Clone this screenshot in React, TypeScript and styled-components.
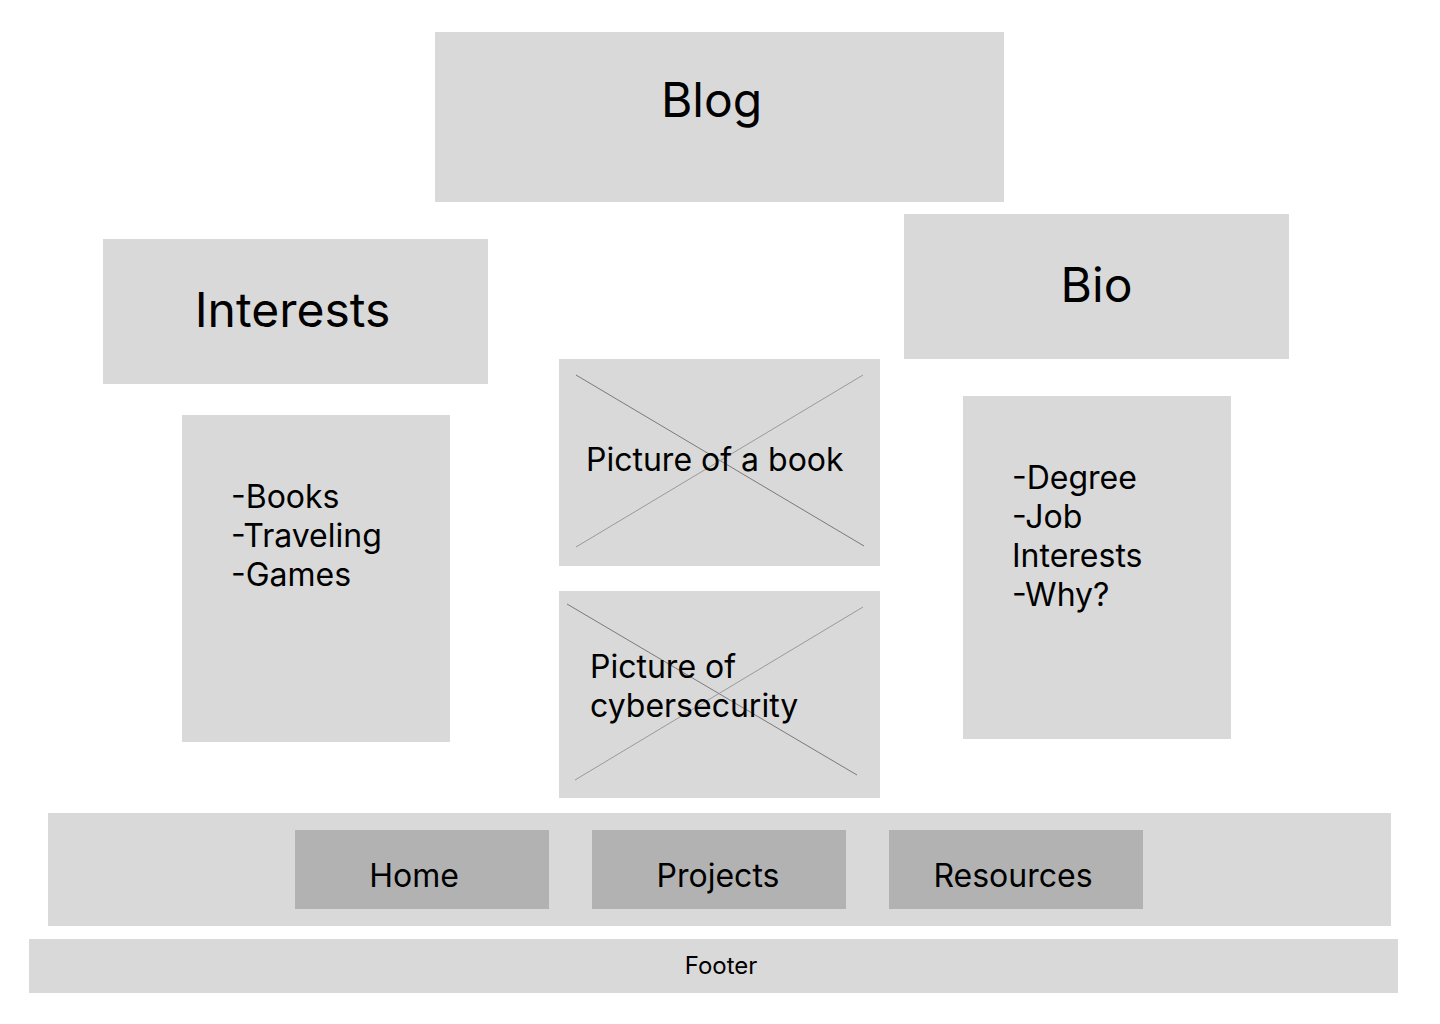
import styled, { createGlobalStyle } from "styled-components";

const GlobalStyle = createGlobalStyle`
  body {
    margin: 0;
    background: #ffffff;
    font-family: Inter, "Noto Sans", sans-serif;
    color: #000000;
  }
`;

const UiPage = styled.div`
  width: 1440px;
  min-height: 1024px;
  padding-top: 32px;
  box-sizing: border-box;
`;

const UiBlogRow = styled.div`
  display: flex;
  padding-left: 435px;
`;

const UiBlog = styled.div`
  display: flex;
  justify-content: center;
  width: 569px;
  height: 170px;
  padding: 39px 16px 0 0;
  box-sizing: border-box;
  background-color: #d9d9d9;
  font-size: 48px;
  line-height: 58px;
`;

const UiColumns = styled.div`
  display: flex;
  align-items: flex-start;
  padding-left: 103px;
`;

const UiColumn = styled.div<{ $top: number; $width: number; $gap: number }>`
  display: flex;
  flex-direction: column;
  width: ${(p) => p.$width}px;
  padding-top: ${(p) => p.$top}px;
  margin-right: ${(p) => p.$gap}px;
`;

const UiHeading = styled.div<{ $shiftX?: number }>`
  display: flex;
  align-items: center;
  justify-content: center;
  width: 385px;
  height: 145px;
  padding: 0 ${(p) => p.$shiftX ?? 0}px 4px 0;
  box-sizing: border-box;
  background-color: #d9d9d9;
  font-size: 48px;
  line-height: 58px;
`;

const UiList = styled.div<{ $indent: number; $top: number; $height: number }>`
  width: 268px;
  height: ${(p) => p.$height}px;
  margin: ${(p) => p.$top}px 0 0 ${(p) => p.$indent}px;
  padding: 62px 0 0 49px;
  box-sizing: border-box;
  background-color: #d9d9d9;
`;

const UiListText = styled.div<{ $width: number }>`
  width: ${(p) => p.$width}px;
  font-size: 32px;
  line-height: 39px;
`;

const UiPicture = styled.div<{ $padLeft: number; $shift: number }>`
  position: relative;
  display: flex;
  align-items: center;
  width: 321px;
  height: 207px;
  padding: 0 20px ${(p) => p.$shift}px ${(p) => p.$padLeft}px;
  box-sizing: border-box;
  background-color: #d9d9d9;
  font-size: 32px;
  line-height: 39px;

  & + & {
    margin-top: 25px;
  }
`;

const UiCross = styled.svg`
  position: absolute;
  inset: 0;
  width: 100%;
  height: 100%;
  pointer-events: none;
`;

const UiPictureText = styled.span`
  position: relative;
`;

const UiNav = styled.nav`
  display: flex;
  gap: 43px;
  width: 1343px;
  height: 113px;
  margin: 15px 0 0 48px;
  padding: 17px 0 0 247px;
  box-sizing: border-box;
  background-color: #d9d9d9;
`;

const UiNavBtn = styled.button<{ $shiftX: number }>`
  width: 254px;
  height: 79px;
  padding: 12px ${(p) => p.$shiftX}px 0 0;
  border: none;
  background-color: #b2b2b2;
  font-family: Inter, "Noto Sans", sans-serif;
  font-size: 32px;
  color: #000000;
  cursor: pointer;
`;

const UiFooter = styled.footer`
  display: flex;
  align-items: center;
  justify-content: center;
  width: 1369px;
  height: 54px;
  margin: 13px 0 0 29px;
  padding: 0 0 2px 15px;
  box-sizing: border-box;
  background-color: #d9d9d9;
  font-size: 24px;
  line-height: 29px;
`;

type Line = [number, number, number, number];

const Picture = ({
  text,
  padLeft,
  shift,
  lines,
}: {
  text: string;
  padLeft: number;
  shift: number;
  lines: Line[];
}) => (
  <UiPicture $padLeft={padLeft} $shift={shift}>
    <UiCross viewBox="0 0 321 207">
      {lines.map(([x1, y1, x2, y2], i) => (
        <line
          key={i}
          x1={x1}
          y1={y1}
          x2={x2}
          y2={y2}
          stroke={i === 0 ? "#7a7a7a" : "#9a9a9a"}
          strokeWidth="1"
        />
      ))}
    </UiCross>
    <UiPictureText>{text}</UiPictureText>
  </UiPicture>
);

export default function App() {
  return (
    <UiPage>
      <GlobalStyle />
      <UiBlogRow>
        <UiBlog>Blog</UiBlog>
      </UiBlogRow>

      <UiColumns>
        <UiColumn $top={37} $width={385} $gap={71}>
          <UiHeading $shiftX={6}>Interests</UiHeading>
          <UiList $indent={79} $top={31} $height={327}>
            <UiListText $width={200}>
              -Books
              <br />
              -Traveling
              <br />
              -Games
            </UiListText>
          </UiList>
        </UiColumn>

        <UiColumn $top={157} $width={321} $gap={24}>
          <Picture
            text="Picture of a book"
            padLeft={27}
            shift={6}
            lines={[
              [17, 16, 305, 187],
              [17, 188, 304, 16],
            ]}
          />
          <Picture
            text="Picture of cybersecurity"
            padLeft={31}
            shift={17}
            lines={[
              [8, 13, 298, 184],
              [16, 189, 304, 16],
            ]}
          />
        </UiColumn>

        <UiColumn $top={12} $width={385} $gap={0}>
          <UiHeading>Bio</UiHeading>
          <UiList $indent={59} $top={37} $height={343}>
            <UiListText $width={170}>
              -Degree
              <br />
              -Job Interests
              <br />
              -Why?
            </UiListText>
          </UiList>
        </UiColumn>
      </UiColumns>

      <UiNav>
        <UiNavBtn $shiftX={16}>Home</UiNavBtn>
        <UiNavBtn $shiftX={2}>Projects</UiNavBtn>
        <UiNavBtn $shiftX={6}>Resources</UiNavBtn>
      </UiNav>

      <UiFooter>Footer</UiFooter>
    </UiPage>
  );
}
